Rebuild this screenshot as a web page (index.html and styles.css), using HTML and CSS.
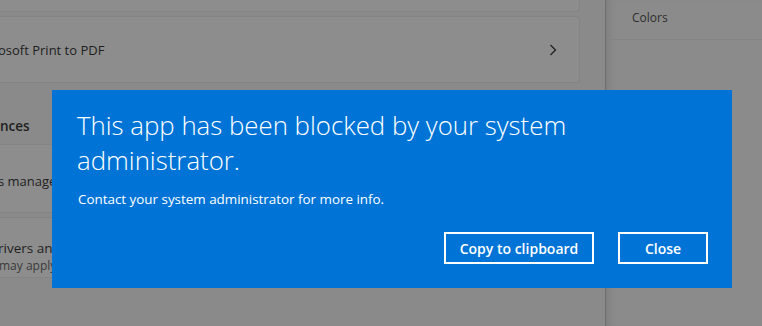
FILE: index.html
```html
<!DOCTYPE html>
<html>
<head>
<meta charset="utf-8">
<link rel="stylesheet" href="styles.css">
</head>
<body>
<div class="page">
  <div class="main">
    <div class="card card-top"></div>
    <div class="card card-printer">
      <span class="row-text">osoft Print to PDF</span>
      <svg class="chevron" width="8" height="12" viewBox="0 0 8 12"><path d="M1.5 1 L6.5 6 L1.5 11" fill="none" stroke="#222" stroke-width="1.3"/></svg>
    </div>
    <div class="section-head">nces</div>
    <div class="card card-manage">
      <span class="row-text">s manage</span>
    </div>
    <div class="card card-drivers">
      <span class="row-text">rivers and</span>
      <span class="row-sub">may apply</span>
    </div>
  </div>
  <div class="side">
    <div class="side-head">Colors</div>
  </div>
</div>
<div class="dialog">
  <h1 class="dlg-title">This app has been blocked by your system administrator.</h1>
  <p class="dlg-text">Contact your system administrator for more info.</p>
  <div class="dlg-actions">
    <button class="dlg-btn btn-copy">Copy to clipboard</button>
    <button class="dlg-btn btn-close">Close</button>
  </div>
</div>
</body>
</html>
```
FILE: styles.css
```css
html, body {
  margin: 0;
  padding: 0;
}
body {
  width: 762px;
  height: 326px;
  overflow: hidden;
  background: #8a8a8a;
  font-family: "Open Sans", "Noto Sans", sans-serif;
  position: relative;
}
.page {
  display: flex;
  height: 326px;
}
.main {
  width: 580px;
  display: flex;
  flex-direction: column;
}
.card {
  background: #8d8d8d;
  border: 1px solid #848484;
  border-left: none;
  border-radius: 0 4px 4px 0;
  box-sizing: border-box;
}
.card-top {
  height: 14px;
  margin-top: -2px;
}
.card-printer {
  margin-top: 4px;
  height: 67px;
  display: flex;
  align-items: center;
  justify-content: space-between;
  padding-right: 22px;
}
.row-text {
  font-size: 13px;
  color: #1f1f1f;
  margin-left: -2px;
  white-space: nowrap;
}
.chevron {
  display: block;
}
.section-head {
  height: 62px;
  display: flex;
  align-items: flex-end;
  padding-bottom: 9px;
  box-sizing: border-box;
  font-size: 13.5px;
  font-weight: 600;
  color: #1f1f1f;
  border-bottom: 1px solid #848484;
}
.card-manage {
  height: 68px;
  border-top: none;
  display: flex;
  align-items: center;
  padding-top: 4px;
}
.card-drivers {
  margin-top: 4px;
  height: 61px;
  display: flex;
  flex-direction: column;
  justify-content: center;
  padding-top: 18px;
}
.row-sub {
  font-size: 12px;
  color: #3a3a3a;
  margin-left: -1px;
  line-height: 16px;
}
.card-drivers .row-text {
  font-size: 13.5px;
  line-height: 19px;
}
.side {
  margin-left: 25px;
  flex: 1;
  border-left: 1px solid #6f6f6f;
  box-shadow: inset 8px 0 8px -6px rgba(0,0,0,0.12);
  background: #8b8b8b;
}
.side-head {
  height: 40px;
  box-sizing: border-box;
  border-bottom: 1px solid #848484;
  padding-left: 26px;
  display: flex;
  align-items: center;
  padding-bottom: 5px;
  font-size: 12px;
  color: #2e2e2e;
}
.dialog {
  position: absolute;
  left: 52px;
  top: 90px;
  width: 680px;
  height: 198px;
  background: #0074d6;
  box-sizing: border-box;
  padding: 18px 24px 24px 25px;
  display: flex;
  flex-direction: column;
  color: #fff;
}
.dlg-title {
  margin: 0;
  font-size: 25.8px;
  font-weight: 300;
  line-height: 35px;
  max-width: 520px;
}
.dlg-text {
  margin: 12px 0 0 1px;
  font-size: 13.4px;
  line-height: 18px;
}
.dlg-actions {
  margin-top: auto;
  display: flex;
  justify-content: flex-end;
  gap: 24px;
}
.dlg-btn {
  height: 32px;
  border: 2px solid #fff;
  background: transparent;
  color: #fff;
  font-family: inherit;
  font-size: 14px;
  font-weight: 600;
  padding: 0;
  box-sizing: border-box;
}
.btn-copy { width: 150px; }
.btn-close { width: 90px; }
```
